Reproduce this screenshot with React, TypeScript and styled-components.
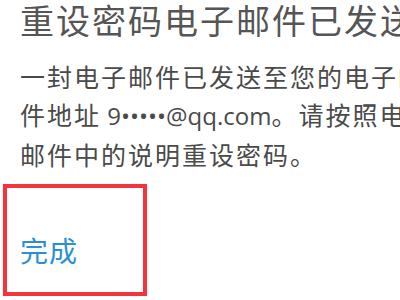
import React from 'react';
import styled, { createGlobalStyle } from 'styled-components';

const GlobalStyle = createGlobalStyle`
  html, body {
    margin: 0;
    padding: 0;
    background: #ffffff;
  }
  body {
    font-family: "Noto Sans CJK SC", "Noto Sans", sans-serif;
    overflow: hidden;
  }
`;

const Page = styled.div`
  width: 400px;
  height: 300px;
  overflow: hidden;
  background: #ffffff;
`;

const Title = styled.h1`
  margin: 0 0 0 20px;
  font-size: 34px;
  line-height: 40px;
  font-weight: 400;
  letter-spacing: 2px;
  color: #555555;
  white-space: nowrap;
`;

const Body = styled.div`
  margin: 17px 0 0 20px;
  color: #4a4a4a;
  font-size: 25px;
  letter-spacing: 2px;
`;

const Line = styled.div`
  line-height: 38px;
  white-space: nowrap;
`;

const Latin = styled.span`
  font-family: "Open Sans", "Noto Sans", sans-serif;
  font-size: 24px;
  letter-spacing: 0;
`;

const DoneFrame = styled.div`
  margin: 11px 0 0 3px;
  width: 144px;
  height: 112px;
  box-sizing: border-box;
  border: 4px solid #f5333f;
  padding: 44px 0 0 13px;
`;

const DoneButton = styled.button`
  border: none;
  background: none;
  padding: 0;
  font-family: inherit;
  font-size: 28px;
  line-height: 36px;
  letter-spacing: 1px;
  color: #2b8fd6;
  cursor: pointer;
`;

const App: React.FC = () => {
  return (
    <Page>
      <GlobalStyle />
      <Title>重设密码电子邮件已发送</Title>
      <Body>
        <Line>一封电子邮件已发送至您的电子邮</Line>
        <Line>
          件地址<Latin> 9•••••@qq.com</Latin>。请按照电子
        </Line>
        <Line>邮件中的说明重设密码。</Line>
      </Body>
      <DoneFrame>
        <DoneButton>完成</DoneButton>
      </DoneFrame>
    </Page>
  );
};

export default App;
